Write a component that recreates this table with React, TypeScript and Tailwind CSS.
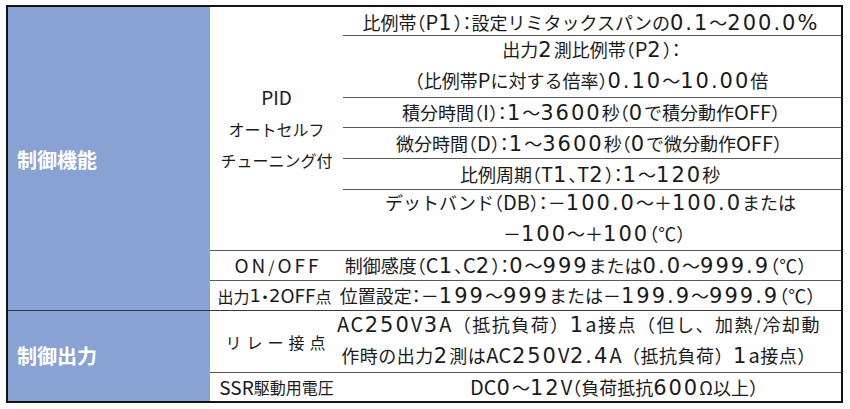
import React from 'react'

// run styles: digits get a wide face, letters stay in the CJK family's Latin
const runCls = {
  main: { num: "font-['DejaVu_Sans'] text-[21px] tracking-[2px]", lat: 'text-[20px]' },
  side: { num: "font-['DejaVu_Sans'] text-[18px]", lat: 'text-[19px]' },
}

function Txt({ s, v = 'main' }: { s: string; v?: 'main' | 'side' }) {
  const parts = s.split(/([0-9.%]+|[A-Za-z]+)/)
  return (
    <>
      {parts.map((p, i) => {
        if (!p) return null
        if (/^[0-9.%]+$/.test(p)) return <span key={i} className={runCls[v].num}>{p}</span>
        if (/^[A-Za-z]+$/.test(p)) return <span key={i} className={runCls[v].lat}>{p}</span>
        return <React.Fragment key={i}>{p}</React.Fragment>
      })}
    </>
  )
}

type Cell = { pos: string; lines: [string, string][] }

const col3: Cell[] = [
  { pos: 'row-start-1 pt-[2px]', lines: [['ml-[14px] w-[468px]', '比例帯（P1）：設定リミタックスパンの0.1～200.0%']] },
  {
    pos: 'row-start-2 border-t border-[#5a5a5a] pb-[4px]',
    lines: [
      ['ml-[152px] w-[193px]', '出力2測比例帯（P2）：'],
      ['ml-[70px] w-[357px]', '（比例帯Pに対する倍率）0.10～10.00倍'],
    ],
  },
  { pos: 'row-start-3 border-t border-[#5a5a5a]', lines: [['ml-[52px] w-[392px]', '積分時間（I）：1～3600秒（0で積分動作OFF）']] },
  { pos: 'row-start-4 border-t border-[#5a5a5a]', lines: [['ml-[47px] w-[398px]', '微分時間（D）：1～3600秒（0で微分動作OFF）']] },
  { pos: 'row-start-5 border-t border-[#5a5a5a]', lines: [['ml-[117px] w-[260px]', '比例周期（T1、T2）：1～120秒']] },
  {
    pos: 'row-start-6 border-t border-[#5a5a5a] pb-[4px]',
    lines: [
      ['ml-[42px] w-[407px]', 'デットバンド（DB）：－100.0～＋100.0または'],
      ['ml-[160px] w-[179px]', '－100～＋100（℃）'],
    ],
  },
  { pos: 'row-start-7 border-t border-[#5a5a5a]', lines: [['ml-[-10px] w-[485px]', '制御感度（C1、C2）：0～999または0.0～999.9（℃）']] },
  { pos: 'row-start-8 border-t border-[#5a5a5a]', lines: [['ml-[-10px] w-[489px]', '位置設定：－199～999または－199.9～999.9（℃）']] },
  {
    pos: 'row-start-9 border-t border-[#3a3a3a] pb-[3px]',
    lines: [
      ['ml-[-6px] w-[478px] tracking-[1.5px] [font-feature-settings:normal]', 'AC250V3A（抵抗負荷）1a接点（但し、加熱/冷却動'],
      ['ml-[-6px] w-[483px] tracking-[0.5px] [font-feature-settings:normal]', '作時の出力2測はAC250V2.4A（抵抗負荷）1a接点）'],
    ],
  },
  { pos: 'row-start-10 border-t border-[#5a5a5a]', lines: [['ml-[127px] w-[270px]', 'DC0～12V（負荷抵抗600Ω以上）']] },
]

export default function App() {
  return (
    <div className="w-[850px] h-[409px] bg-white pt-[5px] pl-[6px] font-['Noto_Sans_CJK_JP',sans-serif] text-[#1a1a1a] [font-feature-settings:'halt']">
      <div className="w-[837px] h-[398px] border-2 border-[#141414] grid grid-cols-[202px_133px_498px] grid-rows-[28px_62px_30px_31px_31px_61px_30px_30px_62px_29px]">
        {/* left headings */}
        <div className="col-start-1 row-start-1 row-span-8 bg-[#88a2d4] flex items-center pl-[9px] pt-[2px]">
          <span className="text-white text-[20px] font-bold">制御機能</span>
        </div>
        <div className="col-start-1 row-start-9 row-span-2 bg-[#88a2d4] border-t border-[#2f3440] flex items-center pl-[9px]">
          <span className="text-white text-[20px] font-bold">制御出力</span>
        </div>

        {/* middle column */}
        <div className="col-start-2 row-start-1 row-span-6 flex flex-col items-center justify-center text-[16px] leading-[31px] pb-[1px]">
          <div><Txt s="PID" v="side" /></div>
          <div>オートセルフ</div>
          <div>チューニング付</div>
        </div>
        <div className="col-start-2 row-start-7 border-t border-[#5a5a5a] flex items-center justify-center text-[16px] tracking-[3px] pl-[3px]">
          <Txt s="ON/OFF" v="side" />
        </div>
        <div className="col-start-2 row-start-8 border-t border-[#5a5a5a] flex items-center justify-center text-[16px] pr-[4px]">
          <Txt s="出力1・2OFF点" v="side" />
        </div>
        <div className="col-start-2 row-start-9 border-t border-[#3a3a3a] flex items-center justify-center text-[16px] tracking-[5px] pl-[3px]">
          リレー接点
        </div>
        <div className="col-start-2 row-start-10 border-t border-[#5a5a5a] flex items-center justify-center text-[16px]">
          <Txt s="SSR駆動用電圧" v="side" />
        </div>

        {/* right column */}
        {col3.map((c, i) => (
          <div key={i} className={`col-start-3 ${c.pos} flex flex-col justify-center text-[18px] leading-[30px]`}>
            {c.lines.map(([box, s], j) => (
              <div key={j} className={`${box} whitespace-nowrap text-center`}>
                <Txt s={s} />
              </div>
            ))}
          </div>
        ))}
      </div>
    </div>
  )
}
